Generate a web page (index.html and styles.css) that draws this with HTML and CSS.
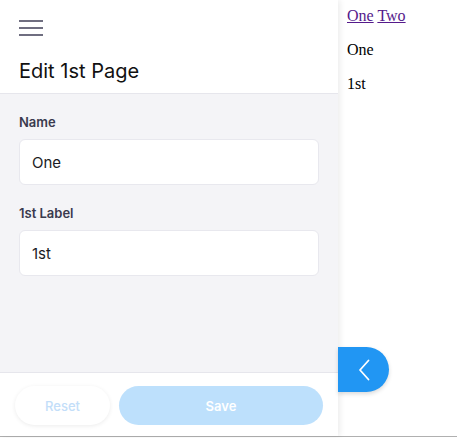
FILE: index.html
```html
<!DOCTYPE html>
<html>
<head>
<meta charset="utf-8">
<link rel="stylesheet" href="styles.css">
</head>
<body>
<div class="app">
  <aside class="drawer">
    <header class="drawer-head">
      <button class="menu" aria-label="Menu">
        <span></span><span></span><span></span>
      </button>
      <h1 class="title">Edit 1st Page</h1>
    </header>
    <div class="drawer-body">
      <label class="field">
        <span class="label">Name</span>
        <span class="input">One</span>
      </label>
      <label class="field">
        <span class="label">1st Label</span>
        <span class="input">1st</span>
      </label>
    </div>
    <footer class="drawer-foot">
      <button class="btn btn-reset">Reset</button>
      <button class="btn btn-save">Save</button>
    </footer>
  </aside>
  <main class="page">
    <nav><a href="#">One</a> <a href="#">Two</a></nav>
    <p>One</p>
    <p>1st</p>
  </main>
  <button class="toggle" aria-label="Close">
    <svg width="14" height="22" viewBox="0 0 14 22"><path d="M11.5 1.5 L3 11 L11.5 20.5" fill="none" stroke="#fff" stroke-width="1.8" stroke-linecap="round" stroke-linejoin="round"/></svg>
  </button>
</div>
<div class="bottom-line"></div>
</body>
</html>
```
FILE: styles.css
```css
html, body {
  margin: 0;
  padding: 0;
  background: #fff;
  overflow: hidden;
}
.app {
  position: relative;
  display: flex;
  height: 436px;
}
.drawer {
  width: 338px;
  flex: none;
  display: flex;
  flex-direction: column;
  background: #f4f4f7;
  box-shadow: 2px 0 6px rgba(0,0,0,0.08);
  font-family: Inter, "Noto Sans", sans-serif;
  position: relative;
  z-index: 1;
}
.drawer-head {
  background: #fff;
  border-bottom: 1px solid #e6e6ec;
  padding: 18px 19px 11px;
  height: 64px;
}
.menu {
  display: flex;
  flex-direction: column;
  gap: 5px;
  width: 24px;
  padding: 0;
  margin: 2px 0 0;
  border: 0;
  background: none;
}
.menu span {
  display: block;
  height: 2px;
  background: #6f6e80;
}
.title {
  margin: 23px 0 0;
  font-size: 20px;
  font-weight: 400;
  line-height: 24px;
  color: #111;
}
.drawer-body {
  flex: 1;
  padding: 20px 19px 0;
  display: flex;
  flex-direction: column;
  gap: 20px;
}
.field {
  display: flex;
  flex-direction: column;
  gap: 9px;
}
.label {
  font-size: 13px;
  font-weight: 600;
  color: #3a3a4e;
  line-height: 16px;
}
.input {
  box-sizing: border-box;
  height: 46px;
  width: 300px;
  background: #fff;
  border: 1px solid #e8e8ee;
  border-radius: 6px;
  padding: 0 12px;
  display: flex;
  align-items: center;
  font-size: 15px;
  color: #1b1b24;
}
.drawer-foot {
  background: #fff;
  border-top: 1px solid #e6e6ec;
  height: 64px;
  box-sizing: border-box;
  padding: 13px 15px 0;
  display: flex;
  gap: 9px;
}
.btn {
  height: 39px;
  border-radius: 20px;
  border: 0;
  font-family: Inter, "Noto Sans", sans-serif;
  font-size: 13px;
  font-weight: 500;
}
.btn-reset {
  width: 95px;
  background: #fff;
  color: #c3def9;
  box-shadow: 0 1px 4px rgba(0,0,0,0.08);
}
.btn-save {
  width: 204px;
  background: #bde0fc;
  color: #fff;
  font-weight: 600;
}
.page {
  padding: 7px 9px;
  font-family: "Liberation Serif", serif;
  font-size: 16px;
  line-height: 18px;
  color: #000;
}
.page nav a {
  color: #551a8b;
}
.page p {
  margin: 16px 0 0;
}
.toggle {
  position: absolute;
  left: 338px;
  top: 347px;
  width: 51px;
  height: 45px;
  padding: 0;
  border: 0;
  border-radius: 0 23px 23px 0;
  background: #2196f3;
  display: flex;
  align-items: center;
  justify-content: center;
  box-shadow: 0 2px 4px rgba(0,0,0,0.15);
  z-index: 2;
}
.bottom-line {
  border-top: 1px solid #b0b0b0;
  height: 1px;
}
```
